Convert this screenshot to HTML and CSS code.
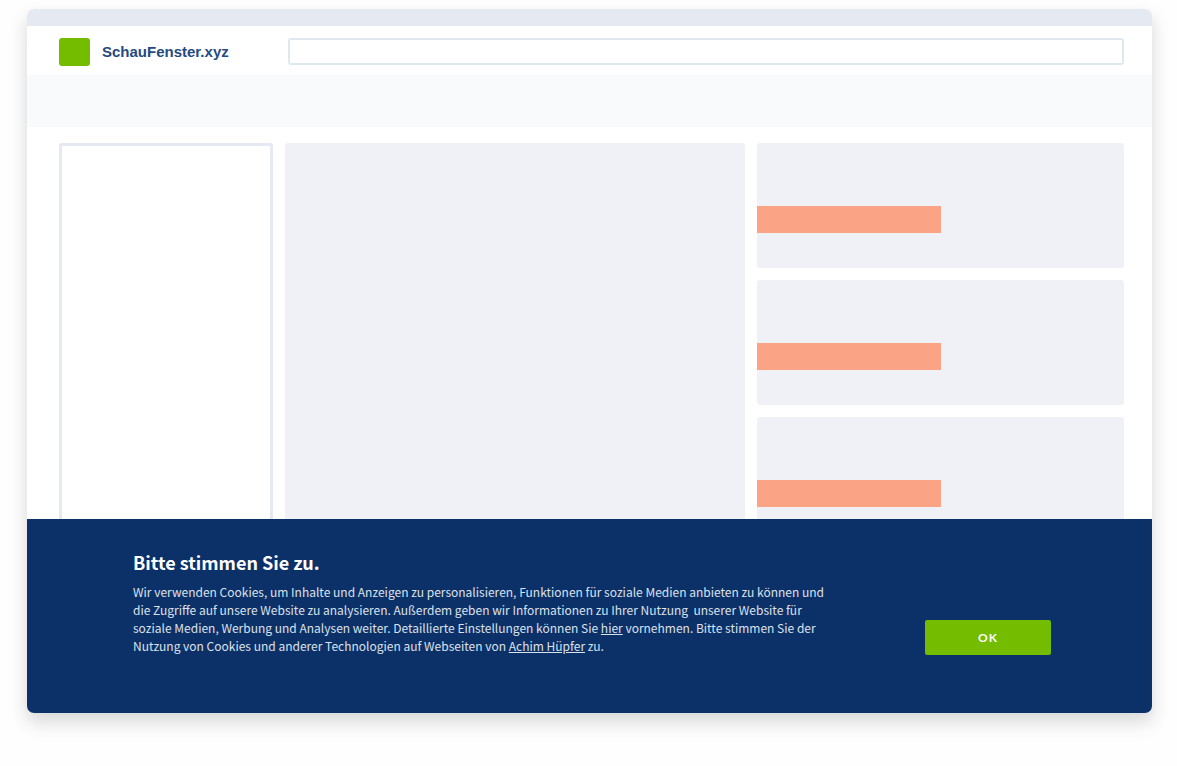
FILE: index.html
```html
<!DOCTYPE html>
<html lang="de">
<head>
  <meta charset="utf-8">
  <meta name="viewport" content="width=device-width, initial-scale=1">
  <title>SchauFenster.xyz</title>
  <link rel="stylesheet" href="styles.css">
</head>
<body>
  <div class="window">
    <div class="titlebar"></div>
    <header class="header">
      <div class="brand">
        <span class="logo"></span>
        <span class="name">SchauFenster.xyz</span>
      </div>
      <input class="search" type="search" aria-label="Suche">
    </header>
    <div class="band"></div>
    <main class="content">
      <aside class="sidebar"></aside>
      <section class="article"></section>
      <div class="cards">
        <div class="card"><div class="bar"></div></div>
        <div class="card"><div class="bar"></div></div>
        <div class="card"><div class="bar"></div></div>
      </div>
    </main>
    <section class="consent" aria-labelledby="consent-title">
      <div class="message">
        <h1 class="title" id="consent-title">Bitte stimmen Sie zu.</h1>
        <p class="text">Wir verwenden Cookies, um Inhalte und Anzeigen zu personalisieren, Funktionen für soziale Medien anbieten zu können und die Zugriffe auf unsere Website zu analysieren. Außerdem geben wir Informationen zu Ihrer Nutzung&nbsp; unserer Website für soziale Medien, Werbung und Analysen weiter. Detaillierte Einstellungen können Sie <a class="link" href="#">hier</a> vornehmen. Bitte stimmen Sie der Nutzung von Cookies und anderer Technologien auf Webseiten von <a class="link" href="#">Achim Hüpfer</a> zu.</p>
      </div>
      <button class="accept" type="button">OK</button>
    </section>
  </div>
</body>
</html>
```

FILE: styles.css
```css
* {
  box-sizing: border-box;
}

body {
  display: flex;
  height: 100vh;
  margin: 0;
  padding: 9px 25px 53px 27px;
  background: #fefefe;
  overflow: hidden;
}

.window {
  display: flex;
  flex: 1;
  flex-direction: column;
  min-width: 0;
  border-radius: 7px;
  background: #fff;
  box-shadow: 0 8px 18px rgba(0, 0, 0, 0.15), 0 16px 24px 8px rgba(0, 0, 0, 0.01);
  overflow: hidden;
}

.titlebar {
  flex: none;
  height: 17px;
  background: #e5e9f2;
}

.header {
  display: flex;
  flex: none;
  align-items: center;
  height: 49px;
  padding: 2px 28px 0 32px;
}

.brand {
  display: flex;
  align-items: center;
  gap: 12px;
  width: 229px;
}

.logo {
  width: 31px;
  height: 28px;
  border-radius: 3px;
  background: #73bc00;
}

.name {
  color: #264a80;
  font: bold 15px/20px "Liberation Sans", Arial, sans-serif;
}

.search {
  flex: 1;
  min-width: 0;
  height: 27px;
  margin: 0;
  padding: 0 8px;
  border: 2px solid #e0e8ef;
  border-radius: 3px;
  background: #fff;
  appearance: none;
}

.band {
  flex: none;
  height: 52px;
  background: #f9fafc;
}

.content {
  display: grid;
  flex: 1;
  grid-template-columns: 214fr 460fr 367fr;
  gap: 12px;
  min-height: 0;
  padding: 16px 28px 0 32px;
  overflow: hidden;
}

.sidebar {
  border: 3px solid #e5e9f2;
  border-bottom: 0;
  border-radius: 3px 3px 0 0;
}

.article {
  border-radius: 3px 3px 0 0;
  background: #f0f1f7;
}

.cards {
  display: flex;
  flex-direction: column;
  gap: 12px;
}

.card {
  flex: none;
  height: 125px;
  padding-top: 63px;
  border-radius: 3px;
  background: #f0f1f7;
}

.bar {
  width: 50%;
  height: 27px;
  background: #fba385;
}

.consent {
  display: flex;
  flex: none;
  align-items: center;
  justify-content: space-between;
  gap: 24px;
  padding: 28px 101px 58px 106px;
  background: #0c3068;
  font-family: "Noto Sans CJK SC", "Noto Sans", sans-serif;
}

.message {
  max-width: 696px;
}

.title {
  margin: 0 0 6px;
  color: #fff;
  font-size: 18px;
  font-weight: bold;
  line-height: 30px;
}

.text {
  margin: 0;
  color: #dce2ec;
  font-size: 12px;
  line-height: 18px;
}

.link {
  color: inherit;
  text-decoration: underline;
}

.accept {
  flex: none;
  align-self: flex-end;
  width: 126px;
  height: 35px;
  border: 0;
  border-radius: 2px;
  background: #73bc00;
  color: #fff;
  font: bold 12px/16px Lato, sans-serif;
  letter-spacing: 1px;
}
```
